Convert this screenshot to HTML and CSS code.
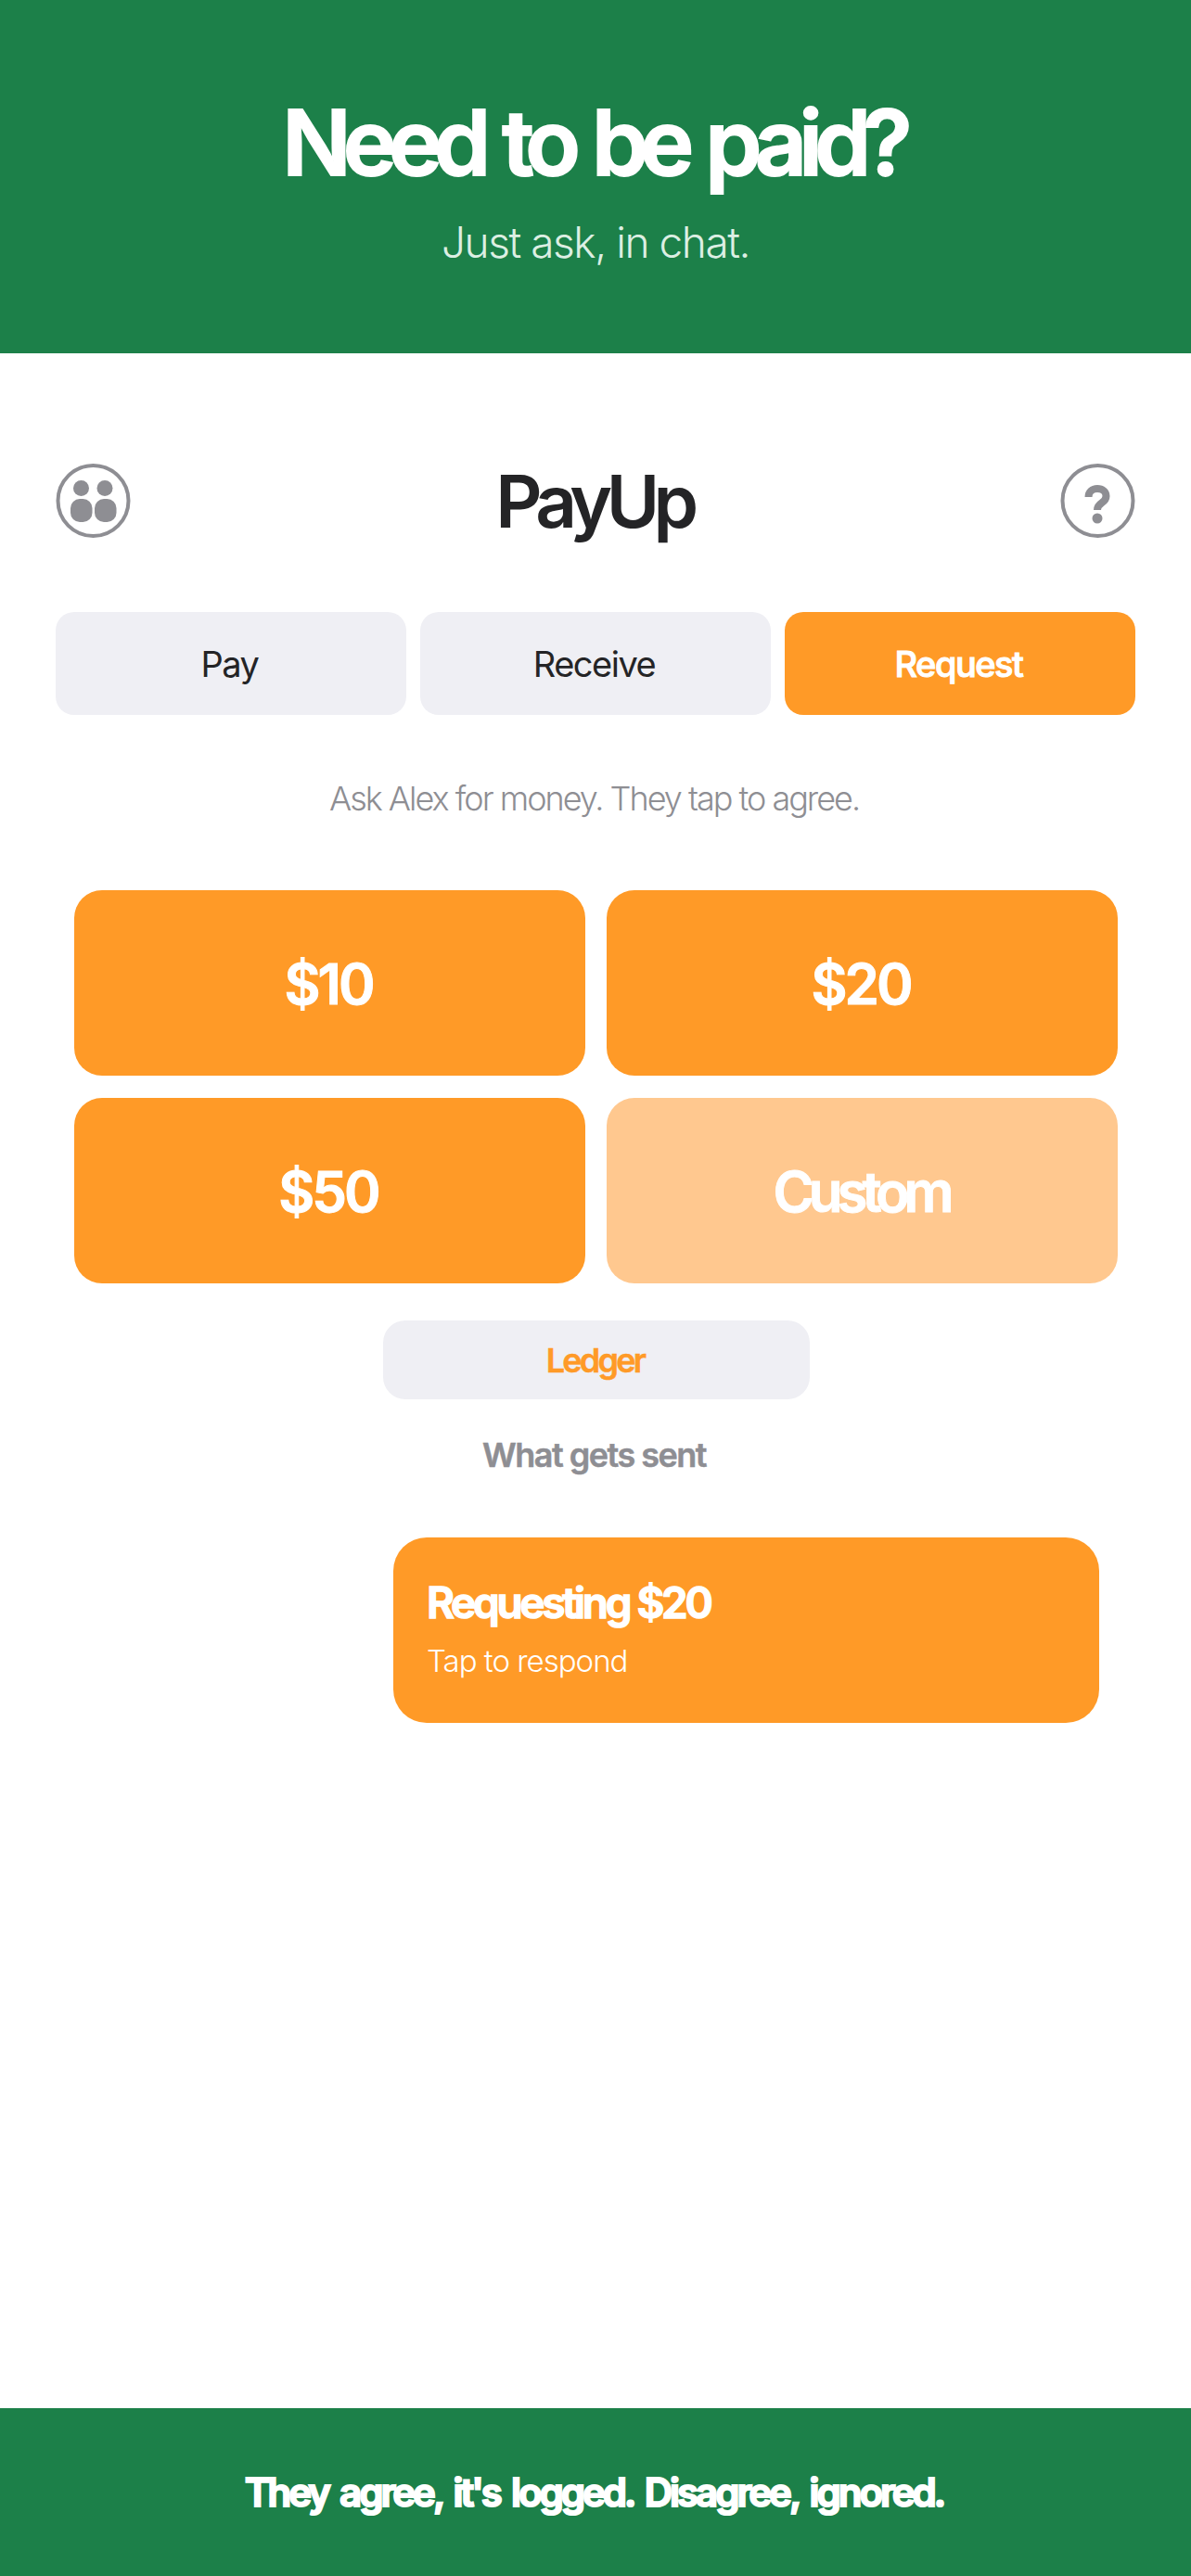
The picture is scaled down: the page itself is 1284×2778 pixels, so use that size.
FILE: index.html
```html
<!DOCTYPE html>
<html lang="en">
<head>
  <meta charset="UTF-8">
  <meta name="viewport" content="width=device-width, initial-scale=1.0">
  <title>PayUp</title>
  <link rel="stylesheet" href="styles.css">
</head>
<body>
  <header class="banner">
    <h1>Need to be paid?</h1>
    <p>Just ask, in chat.</p>
  </header>

  <main class="app">
    <div class="app-bar">
      <button class="icon-btn" aria-label="People">
        <svg width="81" height="80" viewBox="0 0 81 80">
          <circle cx="40.500" cy="40" r="38" fill="none" stroke="#8e8e93" stroke-width="4"/>
          <circle cx="27.500" cy="26.500" r="8.500" fill="#8e8e93"/>
          <circle cx="53" cy="26.500" r="8.500" fill="#8e8e93"/>
          <rect x="16" y="38" width="23.500" height="25" rx="10" fill="#8e8e93"/>
          <rect x="42" y="38" width="23.500" height="25" rx="10" fill="#8e8e93"/>
        </svg>
      </button>
      <div class="app-title">PayUp</div>
      <button class="icon-btn" aria-label="Help">
        <svg width="81" height="80" viewBox="0 0 81 80">
          <circle cx="40.500" cy="40" r="38" fill="none" stroke="#8e8e93" stroke-width="4"/>
          <path d="M30.500 36c0-5.500 4-9 9.500-9s9.500 3.500 9.500 8c0 3.500-2 5.500-4.800 7.300-3 2-4.700 3.500-4.700 7.700" fill="none" stroke="#8e8e93" stroke-width="8"/>
          <circle cx="40" cy="59" r="5.500" fill="#8e8e93"/>
        </svg>
      </button>
    </div>

    <div class="tabs">
      <div class="tab">Pay</div>
      <div class="tab">Receive</div>
      <div class="tab active">Request</div>
    </div>

    <p class="hint">Ask Alex for money. They tap to agree.</p>

    <div class="amounts">
      <div class="amount">$10</div>
      <div class="amount">$20</div>
      <div class="amount">$50</div>
      <div class="amount custom">Custom</div>
    </div>

    <div class="ledger">Ledger</div>
    <div class="sent-label">What gets sent</div>

    <div class="bubble">
      <div class="bubble-title">Requesting $20</div>
      <div class="bubble-sub">Tap to respond</div>
    </div>
  </main>

  <footer class="footer">They agree, it's logged. Disagree, ignored.</footer>
</body>
</html>
```

FILE: styles.css
```css
body {
  margin: 0;
  height: 2778px;
  display: flex;
  flex-direction: column;
  background-color: #fff;
  font-family: 'Inter', 'Liberation Sans', sans-serif;
}

.banner {
  height: 381px;
  box-sizing: border-box;
  padding-top: 94px;
  background-color: #1c8049;
  color: #fff;
  text-align: center;
}

.banner h1 {
  margin: 0;
  padding-right: 5px;
  font-size: 98px;
  line-height: 120px;
  font-weight: 600;
  letter-spacing: -8.800px;
  word-spacing: 5px;
  -webkit-text-stroke: 2px #fff;
}

.banner p {
  margin: 20px 0 0;
  font-size: 46px;
  line-height: 54px;
  font-weight: 300;
  letter-spacing: -1.450px;
  color: #dcefe3;
}

.app {
  flex: 1;
  padding: 0 60px;
}

.app-bar {
  height: 80px;
  display: flex;
  justify-content: space-between;
  align-items: center;
  margin-top: 119px;
}

.icon-btn {
  width: 81px;
  height: 80px;
  padding: 0;
  border: none;
  background: none;
}

.app-title {
  padding-right: 3px;
  font-size: 78px;
  font-weight: 600;
  letter-spacing: -6.500px;
  color: #242426;
}

.tabs {
  display: flex;
  gap: 15px;
  margin-top: 80px;
}

.tab {
  flex: 1;
  height: 111px;
  box-sizing: border-box;
  padding-right: 3px;
  display: flex;
  justify-content: center;
  align-items: center;
  border-radius: 20px;
  background-color: #efeff4;
  color: #242426;
  font-size: 38px;
  font-weight: 400;
  letter-spacing: -1.500px;
}

.tab.active {
  background-color: #ff9a27;
  color: #fff;
  font-weight: 500;
  -webkit-text-stroke: 1px #fff;
}

.hint {
  margin: 68px 0 0;
  padding-right: 3px;
  text-align: center;
  font-size: 36px;
  line-height: 44px;
  font-weight: 300;
  letter-spacing: -2px;
  color: #8e8e93;
}

.amounts {
  display: grid;
  grid-template-columns: 1fr 1fr;
  gap: 24px 23px;
  margin: 77px 19px 0 20px;
}

.amount {
  height: 200px;
  box-sizing: border-box;
  padding: 2px 3px 0 0;
  display: flex;
  justify-content: center;
  align-items: center;
  border-radius: 30px;
  background-color: #ff9a27;
  color: #fff;
  font-size: 60px;
  font-weight: 600;
  letter-spacing: -3px;
  -webkit-text-stroke: 1px #fff;
}

.amount.custom {
  background-color: #ffc88f;
  letter-spacing: -6px;
}

.ledger {
  width: 460px;
  height: 85px;
  box-sizing: border-box;
  padding-right: 3px;
  margin: 40px 351px 0 353px;
  display: flex;
  justify-content: center;
  align-items: center;
  border-radius: 24px;
  background-color: #efeff4;
  color: #ff9a27;
  font-size: 36px;
  font-weight: 600;
  letter-spacing: -2.800px;
  -webkit-text-stroke: 0.5px #ff9a27;
}

.sent-label {
  margin-top: 38px;
  padding-right: 3px;
  text-align: center;
  font-size: 36px;
  line-height: 44px;
  font-weight: 600;
  letter-spacing: -1.500px;
  color: #8e8e93;
  -webkit-text-stroke: 0.5px #8e8e93;
}

.bubble {
  width: 761px;
  height: 200px;
  box-sizing: border-box;
  margin: 67px 39px 0 auto;
  padding: 44px 36px 0;
  border-radius: 36px;
  background-color: #ff9a27;
  color: #fff;
}

.bubble-title {
  font-size: 46px;
  line-height: 52px;
  font-weight: 600;
  letter-spacing: -3.300px;
  -webkit-text-stroke: 1.500px #fff;
}

.bubble-sub {
  margin-top: 17px;
  font-size: 33px;
  line-height: 40px;
  font-weight: 300;
  letter-spacing: -1px;
}

.footer {
  height: 181px;
  box-sizing: border-box;
  padding-right: 3px;
  display: flex;
  justify-content: center;
  align-items: center;
  background-color: #1c8049;
  color: #fff;
  font-size: 42px;
  font-weight: 600;
  letter-spacing: -3px;
  word-spacing: 4.500px;
  -webkit-text-stroke: 2px #fff;
}
```
